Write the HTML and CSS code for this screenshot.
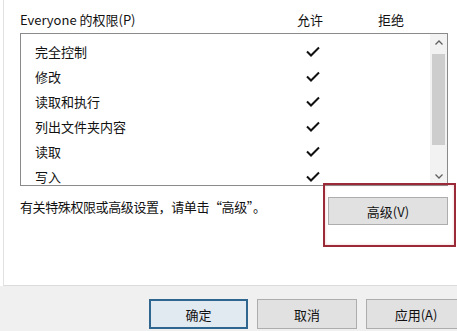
FILE: index.html
```html
<!DOCTYPE html>
<html lang="zh-CN">
  <head>
    <meta charset="UTF-8" />
    <title>Everyone 的权限</title>
    <link rel="stylesheet" href="styles.css">
  </head>
  <body>
    <div class="page">
      <div class="panel">
        <div class="perm-head">
          <span>Everyone 的权限(P)</span>
          <span class="col">允许</span>
          <span></span>
          <span class="col">拒绝</span>
        </div>

        <div class="perm-list">
          <div class="rows">
            <div class="row">
              <span>完全控制</span>
              <span class="cell"><svg class="check" viewBox="0 0 14 11"><path d="M1 5.5 L5 9.5 L13 1.5" /></svg></span>
            </div>
            <div class="row">
              <span>修改</span>
              <span class="cell"><svg class="check" viewBox="0 0 14 11"><path d="M1 5.5 L5 9.5 L13 1.5" /></svg></span>
            </div>
            <div class="row">
              <span>读取和执行</span>
              <span class="cell"><svg class="check" viewBox="0 0 14 11"><path d="M1 5.5 L5 9.5 L13 1.5" /></svg></span>
            </div>
            <div class="row">
              <span>列出文件夹内容</span>
              <span class="cell"><svg class="check" viewBox="0 0 14 11"><path d="M1 5.5 L5 9.5 L13 1.5" /></svg></span>
            </div>
            <div class="row">
              <span>读取</span>
              <span class="cell"><svg class="check" viewBox="0 0 14 11"><path d="M1 5.5 L5 9.5 L13 1.5" /></svg></span>
            </div>
            <div class="row">
              <span>写入</span>
              <span class="cell"><svg class="check" viewBox="0 0 14 11"><path d="M1 5.5 L5 9.5 L13 1.5" /></svg></span>
            </div>
          </div>
          <div class="scrollbar">
            <div class="arrow"><svg viewBox="0 0 8 5"><path d="M0.5 4.5 L4 1 L7.5 4.5" /></svg></div>
            <div class="track"><div class="thumb"></div></div>
            <div class="arrow"><svg viewBox="0 0 8 5"><path d="M0.5 0.5 L4 4 L7.5 0.5" /></svg></div>
          </div>
        </div>

        <div class="hint-row">
          <span class="hint">有关特殊权限或高级设置，请单击“高级”。</span>
          <div class="adv-box">
            <button class="btn adv">高级(V)</button>
          </div>
        </div>
      </div>

      <div class="footer">
        <button class="btn primary">确定</button>
        <button class="btn">取消</button>
        <button class="btn">应用(A)</button>
      </div>
    </div>
  </body>
</html>
```

FILE: styles.css
```css
html,
body {
  margin: 0;
  height: 100%;
  overflow: hidden;
  background: #fff;
}
body {
  font-family: "Noto Sans CJK SC", "Noto Sans", sans-serif;
  font-size: 13px;
  color: #111;
}
.page {
  display: flex;
  flex-direction: column;
  height: 100%;
}
.panel {
  flex: 1;
  margin-left: 3px;
  padding: 11px 9px 0 16px;
  border-left: 1px solid #e2e2e2;
  border-bottom: 1px solid #dcdcdc;
}
.perm-head {
  display: grid;
  grid-template-columns: 270px 40px 41px 40px 1fr;
  line-height: 18px;
  margin-bottom: 4px;
}
.col {
  text-align: center;
}
.perm-list {
  display: flex;
  height: 153px;
  box-sizing: border-box;
  border: 1px solid #8a8a8a;
  overflow: hidden;
}
.rows {
  flex: 1;
  padding: 5px 0 0 14px;
}
.row {
  display: grid;
  grid-template-columns: 258px 40px;
  height: 25px;
  align-items: center;
}
.cell {
  display: flex;
  justify-content: center;
}
.check {
  width: 14px;
  height: 11px;
  fill: none;
  stroke: #111;
  stroke-width: 2;
}
.scrollbar {
  width: 17px;
  display: flex;
  flex-direction: column;
  background: #f2f2f2;
}
.arrow {
  height: 17px;
  display: flex;
  align-items: center;
  justify-content: center;
}
.arrow svg {
  width: 8px;
  height: 5px;
  fill: none;
  stroke: #606060;
  stroke-width: 1.3;
}
.track {
  flex: 1;
  padding-top: 3px;
}
.thumb {
  height: 91px;
  margin: 0 2px;
  background: #cdcdcd;
}
.hint-row {
  display: flex;
  justify-content: space-between;
  align-items: flex-start;
}
.hint {
  margin-top: 12px;
  line-height: 18px;
  letter-spacing: -0.4px;
}
.adv-box {
  margin: -3px -8px 0 0;
  padding: 12px 6px 20px 3px;
  border: 2px solid #9b2a38;
  box-shadow: inset 0 0 3px rgba(220, 110, 110, 0.35);
}
.btn {
  font-family: inherit;
  font-size: 13px;
  color: #111;
  background: #e1e1e1;
  border: 1px solid #adadad;
  padding: 0;
}
.adv {
  width: 120px;
  height: 28px;
  display: block;
}
.footer {
  height: 45px;
  box-sizing: border-box;
  flex: none;
  display: flex;
  gap: 9px;
  padding: 13px 0 0 149px;
  background: #f0f0f0;
}
.footer .btn {
  width: 100px;
  height: 30px;
  flex: none;
}
.footer .primary {
  width: 99px;
  border: 2px solid #2f6690;
  background: #e2eaf1;
}
```
